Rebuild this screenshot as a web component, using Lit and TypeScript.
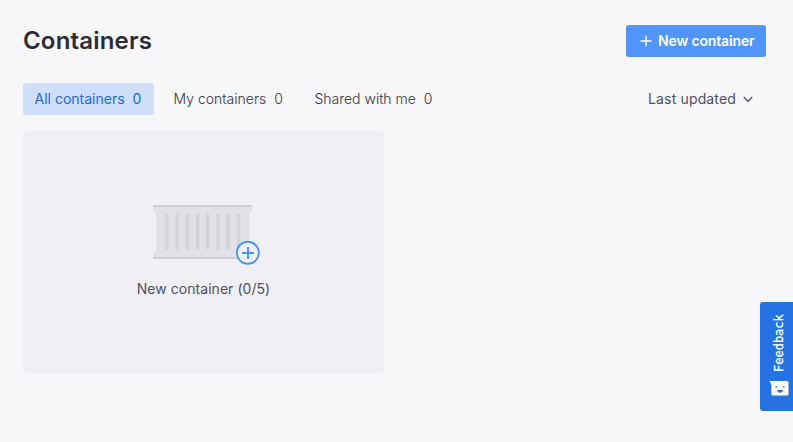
import { LitElement, html, css, svg } from "lit";
import { customElement, state } from "lit/decorators.js";
import { classMap } from "lit/directives/class-map.js";

const TABS = [
  { label: "All containers", count: 0 },
  { label: "My containers", count: 0 },
  { label: "Shared with me", count: 0 },
];

@customElement("container-art")
class ContainerArt extends LitElement {
  static styles = css`
    :host { display: block; width: 108px; height: 61px; }
    svg { display: block; }
  `;
  render() {
    const ribs = [0, 1, 2, 3, 4, 5, 6, 7];
    return html`<svg width="108" height="61" viewBox="0 0 108 61">
      <path d="M0 1H99V4C99 8 96 8 96 12V43C96 47 99 47 99 51V54H0V51C0 47 3.3 47 3.3 43V12C3.3 8 0 8 0 4Z" fill="#e0e1e6" />
      <rect width="99.5" height="2" fill="#cdcdd2" />
      <rect y="52" width="99" height="2" fill="#cdcdd2" />
      ${ribs.map((i) => svg`<rect x=${12 + i * 10.25} y="8.5" width="3.5" height="36.5" rx="1.75" fill="#d3d4d9" />`)}
      <circle cx="94.8" cy="47.8" r="11" fill="#f0eff4" stroke="#4f94fb" stroke-width="1.9" />
      <path d="M89 48H101M95 42V54" stroke="#4f94fb" stroke-width="2" />
    </svg>`;
  }
}

@customElement("feedback-tab")
class FeedbackTab extends LitElement {
  static styles = css`
    :host {
      display: flex; flex-direction: column; align-items: center; box-sizing: border-box;
      width: 33px; height: 109px; padding: 12px 0 0 5px;
      background: #2672e2; border-radius: 3px 0 0 3px; color: #fff;
    }
    .label {
      writing-mode: vertical-rl; transform: rotate(180deg);
      font: 400 12px/16px "DejaVu Sans Mono", monospace;
      -webkit-text-stroke: 0.25px #fff;
      height: 58px; white-space: nowrap;
    }
    svg { display: block; margin-top: 9px; }
  `;
  render() {
    return html`<span class="label">Feedback</span>
      <svg width="20" height="16" viewBox="0 0 20 16">
        <path d="M0 0H18Q19.5 0 19.5 1.5V13Q19.5 14.5 18 14.5H4Q2.3 14.5 2.3 13V4Q2.3 2 0 0Z" fill="#fff" />
        <path d="M6.5 5.2H8V6.7H6.5ZM14 5.2H15.5V6.7H14Z" fill="#2672e2" />
        <path d="M8 9H14Q13.5 11.8 11 11.8T8 9Z" fill="#2672e2" />
      </svg>`;
  }
}

@customElement("app-root")
class AppRoot extends LitElement {
  @state() private active = 0;

  static styles = css`
    :host {
      display: block; box-sizing: border-box; position: relative; overflow: hidden;
      height: 442px; padding: 25px 27px 0 23px; background: #f7f7f9;
      color: #50505f; font: 400 14px/20px Inter, sans-serif;
    }
    header, nav { display: flex; align-items: center; height: 32px; }
    header { justify-content: space-between; }
    h1 { margin: 0; font-size: 24px; line-height: 32px; font-weight: 600; letter-spacing: 0.18px; color: #2b2c38; }
    button { border: 0; background: none; font: inherit; color: inherit; border-radius: 3px; white-space: nowrap; }
    .create {
      display: flex; align-items: center; gap: 6px; width: 140px; height: 32px;
      padding: 0 0 0 14px; background: #5094fc; color: #fff; font-weight: 600; letter-spacing: -0.14px;
    }
    nav { margin-top: 26px; gap: 7.6px; }
    .tab {
      display: flex; align-items: center; gap: 8px; box-sizing: border-box; height: 32px;
      padding: 0 12px; font-weight: 300; color: #343441;
    }
    .tab.on { width: 131px; padding: 0 0 0 11.5px; background: #cfdff9; color: #1c69e0; font-weight: 400; }
    .sort { display: flex; align-items: center; gap: 7px; margin-left: auto; padding: 0 13px 0 0; letter-spacing: 0.15px; }
    .card {
      display: flex; flex-direction: column; align-items: center; box-sizing: border-box;
      width: 361px; height: 242px; margin-top: 16px; padding-top: 74px;
      background: #f0eff4; border-radius: 4px;
    }
    container-art { margin-left: 7px; }
    .caption { margin-top: 13px; letter-spacing: 0.04px; }
    feedback-tab { position: absolute; right: 0; top: 302px; }
    svg { display: block; }
  `;

  render() {
    return html`
      <header>
        <h1>Containers</h1>
        <button class="create">
          <svg width="12" height="12" viewBox="0 0 12 12"><path d="M.5 6H11.5M6 .5V11.5" stroke="#fff" stroke-width="1.4" /></svg>
          <span>New container</span>
        </button>
      </header>
      <nav>
        ${TABS.map((t, i) => html`
          <button class=${classMap({ tab: true, on: i === this.active })} @click=${() => (this.active = i)}>
            <span>${t.label}</span><span>${t.count}</span>
          </button>`)}
        <button class="sort">
          <span>Last updated</span>
          <svg width="10" height="7" viewBox="0 0 10 7"><path d="M.8 1L5 5.5L9.2 1" fill="none" stroke="#50505f" stroke-width="1.4" /></svg>
        </button>
      </nav>
      <section class="card">
        <container-art></container-art>
        <span class="caption">New container (0/5)</span>
      </section>
      <feedback-tab></feedback-tab>
    `;
  }
}
